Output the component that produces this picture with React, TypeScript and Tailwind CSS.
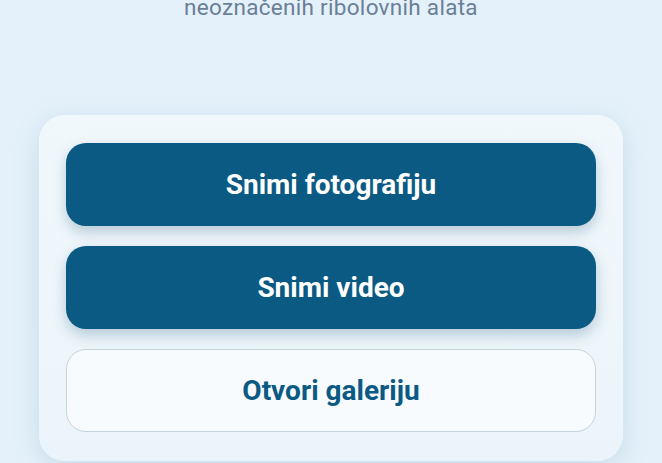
export default function App() {
  return (
    <div
      className="min-h-[463px] w-full overflow-hidden bg-[#e4f1fa] px-[39px]"
      style={{ fontFamily: "Roboto, 'Liberation Sans', sans-serif" }}
    >
      <p className="-mt-[7px] text-center text-[22.5px] leading-[28px] tracking-[0.3px] text-[#6a7f96]">
        neoznačenih ribolovnih alata
      </p>

      <div className="mt-[94px] flex flex-col gap-[20px] rounded-[26px] bg-gradient-to-b from-[#f1f8fc] to-[#ebf4fa] px-[27px] pt-[28px] pb-[29px] shadow-[0_6px_24px_rgba(120,160,190,0.25)]">
        <button className="flex h-[83px] items-center justify-center rounded-[20px] bg-[#0a5a84] text-[28px] font-bold text-white shadow-[0_6px_14px_rgba(10,70,110,0.25)]">
          Snimi fotografiju
        </button>
        <button className="flex h-[83px] items-center justify-center rounded-[20px] bg-[#0a5a84] text-[28px] font-bold text-white shadow-[0_6px_14px_rgba(10,70,110,0.25)]">
          Snimi video
        </button>
        <button className="flex h-[83px] items-center justify-center rounded-[20px] border border-[#c3d4e0] bg-[#f8fbfd] text-[28px] font-bold text-[#0b5a84]">
          Otvori galeriju
        </button>
      </div>
    </div>
  );
}
